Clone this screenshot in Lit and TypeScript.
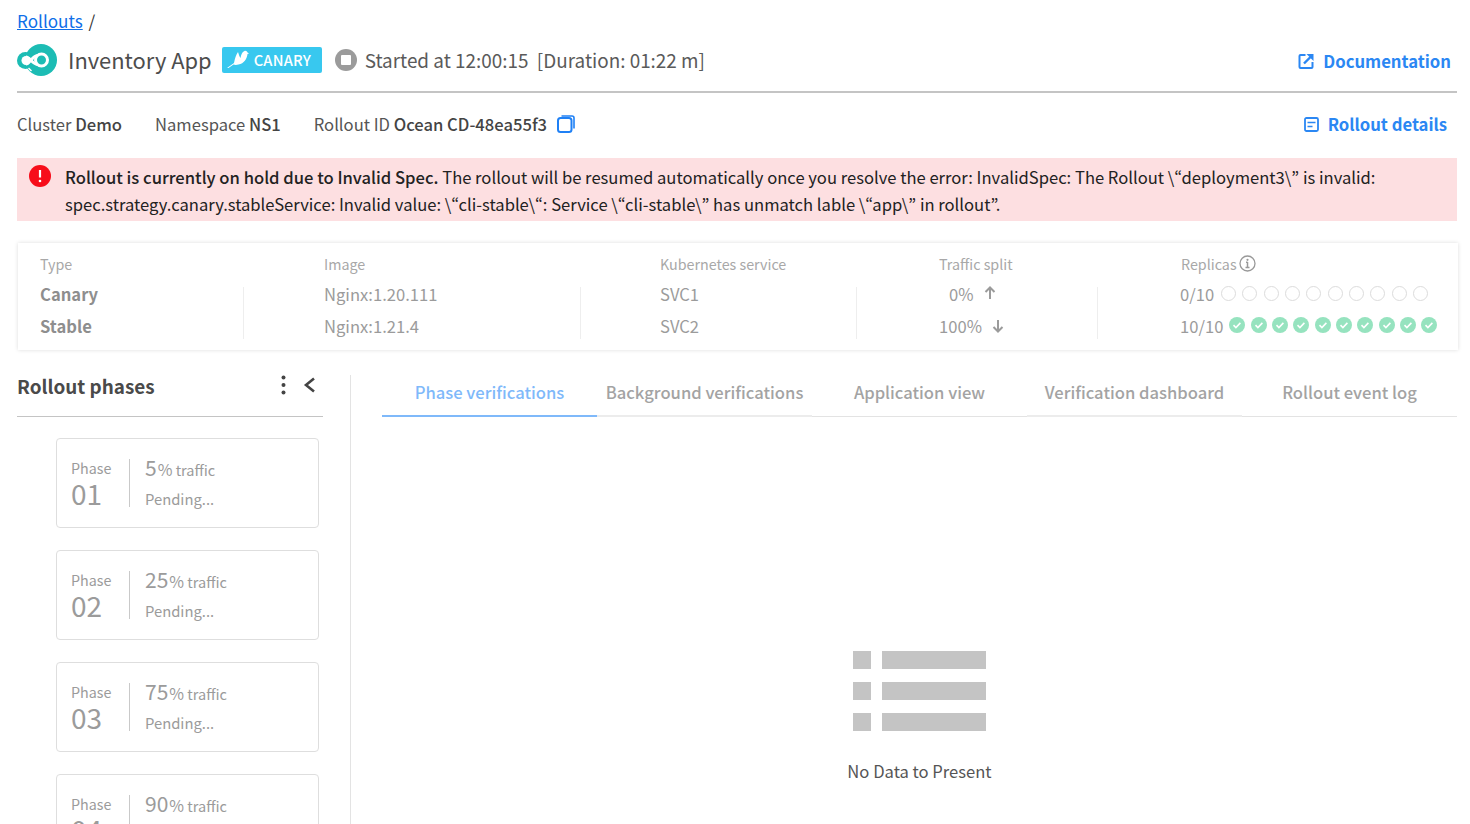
import { LitElement, html, css, svg } from 'lit';
import { customElement } from 'lit/decorators.js';

const PHASES = [
  { id: '01', pct: '5' },
  { id: '02', pct: '25' },
  { id: '03', pct: '75' },
  { id: '04', pct: '90' },
];
const TABS = [
  'Phase verifications',
  'Background verifications',
  'Application view',
  'Verification dashboard',
  'Rollout event log',
];
const TEN = Array.from({ length: 10 });

const logo = svg`<svg class="logo" width="40" height="32" viewBox="0 0 40 32">
  <circle cx="24" cy="16" r="16" fill="#1cbcb4"/>
  <circle cx="8.500" cy="16.500" r="8.500" fill="#1cbcb4"/>
  <circle cx="9" cy="16.500" r="4.500" fill="#fff"/>
  <circle cx="24.500" cy="16" r="6" fill="none" stroke="#fff" stroke-width="3"/>
  <path d="M9 13C13 13 15 20 20.500 20.500M9 20C13 20 15 12 20.500 11.500" fill="none" stroke="#fff" stroke-width="2.800"/>
  <path d="M11.500 24l3 3" stroke="#fff" stroke-width="1.500"/>
</svg>`;

const bird = svg`<svg width="22" height="18" viewBox="0 0 22 18">
  <path d="M0 18L7 13C8 8 9 5 11 2C12 5 12.500 7 13.500 8C14 5 15 2 17.500 1C19 .5 20 1.500 20.500 2.500L22 3.500L20.500 4C20 9 17 13.500 11.500 14.500C9.500 15 8 15 6.500 14.500L1.500 18Z" fill="#fff"/>
</svg>`;

const check = svg`<svg width="16" height="16" viewBox="0 0 16 16">
  <circle cx="8" cy="8" r="8" fill="#96e3bf"/>
  <path d="M4.500 8.200l2.400 2.300 4.500-4.600" fill="none" stroke="#fff" stroke-width="1.600"/>
</svg>`;

@customElement('app-root')
export class AppRoot extends LitElement {
  static styles = css`
    :host {
      display: block;
      height: 824px;
      overflow: hidden;
      box-sizing: border-box;
      padding: 0 13px 0 17px;
      background: #fff;
      color: #4a4a4a;
      font-family: 'Noto Sans CJK JP', 'Noto Sans', sans-serif;
      font-size: 16.6px;
    }
    a {
      color: #0f6fe8;
    }
    .crumb {
      height: 34px;
      line-height: 42px;
      font-size: 17.1px;
      color: #333;
    }
    .crumb a {
      margin-right: 2px;
    }
    .head {
      display: flex;
      align-items: center;
      height: 54px;
      padding-bottom: 3px;
      border-bottom: 2px solid #c4c4c4;
    }
    .logo {
      margin: -2px 11px 0 0;
    }
    .app {
      margin-top: -2px;
      font-size: 21.9px;
      line-height: 32px;
      color: #4d4d4d;
    }
    .badge {
      display: flex;
      align-items: center;
      gap: 5px;
      width: 100px;
      box-sizing: border-box;
      height: 26px;
      margin: -2px 0 0 10px;
      padding: 0 0 2px 5px;
      border-radius: 2px;
      background: #38c8ef;
      color: #fff;
      font-size: 14.7px;
      font-weight: 500;
      letter-spacing: 0.2px;
    }
    .stop {
      display: flex;
      align-items: center;
      justify-content: center;
      width: 22px;
      height: 22px;
      margin: -2px 8px 0 13px;
      border-radius: 50%;
      background: #9b9b9b;
    }
    .stop i {
      width: 10px;
      height: 10px;
      border-radius: 1px;
      background: #fff;
    }
    .started {
      margin-top: -3px;
      font-size: 18.9px;
      color: #5a5a5a;
    }
    .link {
      display: flex;
      align-items: center;
      color: #2b87f3;
      font-weight: 700;
      font-size: 16.7px;
      gap: 9px;
    }
    .head .link {
      margin-left: auto;
      padding-right: 6px;
    }
    .meta {
      display: flex;
      align-items: center;
      height: 62px;
      margin-bottom: 3px;
      color: #555;
    }
    .meta span + span {
      margin-left: 33px;
    }
    .meta b {
      font-weight: 500;
      color: #444;
    }
    .copy {
      margin-left: 10px;
    }
    .meta .link {
      margin-left: auto;
      padding-right: 10px;
    }
    .alert {
      display: flex;
      height: 63px;
      box-sizing: border-box;
      padding: 6px 0 0 12px;
      background: #fddfe1;
      color: #222;
      line-height: 27px;
    }
    .alert svg {
      flex: none;
      margin: 1px 14px 0 0;
    }
    .alert b {
      font-weight: 500;
    }
    .card {
      display: flex;
      height: 107px;
      box-sizing: border-box;
      margin: 22px -1px 25px 1px;
      padding: 10px 0 0 22px;
      box-shadow: 0 0 4px rgba(0, 0, 0, 0.14);
      color: #9b9b9b;
    }
    .col {
      display: flex;
      flex-direction: column;
    }
    .col .label {
      height: 25px;
      line-height: 21px;
      font-size: 14.3px;
      color: #a8a8a8;
    }
    .col .body {
      display: flex;
    }
    .rows {
      flex: 1;
    }
    .rows > div {
      display: flex;
      align-items: center;
      height: 32px;
    }
    .rule {
      width: 1px;
      margin: 9px 0 3px;
      background: #eee;
    }
    .type {
      width: 204px;
      margin-right: 80px;
    }
    .image {
      width: 257px;
      margin-right: 79px;
    }
    .svc {
      width: 197px;
      margin-right: 82px;
    }
    .split {
      width: 159px;
      margin-right: 83px;
    }
    .type .rows {
      font-weight: 700;
      color: #8e8e8e;
    }
    .split .rows > div {
      gap: 10px;
    }
    .split .rows > div:first-child {
      padding-left: 10px;
    }
    .split .rows > div:first-child svg {
      margin-top: -4px;
    }
    .col .label-info {
      display: flex;
      align-items: center;
      gap: 2px;
      height: 21px;
      margin-bottom: 4px;
    }
    .replicas .rows {
      margin-left: -1px;
    }
    .dots {
      display: flex;
      justify-content: space-between;
      align-items: center;
      width: 208px;
      margin: -2px 0 0 6px;
    }
    .dots.idle {
      width: 207px;
      margin-left: 7px;
    }
    .dots i {
      width: 15px;
      height: 15px;
      box-sizing: border-box;
      border: 1px solid #dcdcdc;
      border-radius: 50%;
    }
    .lower {
      display: flex;
    }
    .side {
      flex: none;
      width: 306px;
      margin-right: 27px;
    }
    .side-head {
      display: flex;
      align-items: center;
      height: 41px;
      border-bottom: 1px solid #c4c4c4;
      font-size: 18.9px;
      font-weight: 700;
      color: #4a4a4a;
    }
    .side-head .title {
      margin: -20px auto 0 0;
    }
    .side-head svg {
      margin-top: -21px;
    }
    .phase {
      display: flex;
      height: 90px;
      box-sizing: border-box;
      margin: 0 4px 22px 39px;
      padding: 20px 0 0 14px;
      border: 1px solid #dedede;
      border-radius: 4px;
      color: #9b9b9b;
    }
    .side-head + .phase {
      margin-top: 21px;
    }
    .phase .num {
      width: 58px;
      height: 48px;
      border-right: 1px solid #c9c9c9;
      margin-right: 15px;
      font-size: 14.3px;
    }
    .phase .num span {
      display: block;
      margin-top: -1px;
      line-height: 19px;
    }
    .phase .num b {
      display: block;
      margin-top: 1px;
      font-weight: 400;
      font-size: 28px;
      line-height: 31px;
    }
    .phase .pct {
      height: 24px;
      margin-top: -4px;
      line-height: 24px;
      font-size: 14.5px;
    }
    .phase .pct b {
      font-weight: 400;
      font-size: 21px;
    }
    .phase .pct em {
      font-style: normal;
      font-size: 16px;
      margin-left: 1px;
    }
    .phase .state {
      margin-top: 9px;
      font-size: 14.8px;
      line-height: 22px;
    }
    .main {
      flex: 1;
      padding-left: 31px;
      border-left: 1px solid #e3e3e3;
      height: 449px;
    }
    .tabs {
      display: grid;
      grid-template-columns: repeat(5, 1fr);
    }
    .tab {
      height: 42px;
      box-sizing: border-box;
      border-bottom: 1px solid #e3e3e3;
      text-align: center;
      line-height: 34px;
      color: #a3a3a3;
      font-weight: 500;
    }
    .tab:nth-child(even) {
      border-bottom: 2px solid #ececec;
    }
    .tab.on {
      border-bottom: 2px solid #7fb9fa;
      color: #7fb9fa;
    }
    .empty {
      display: flex;
      flex-direction: column;
      align-items: center;
      margin-top: 234px;
      color: #555;
    }
    .empty p {
      margin: 27px 0 0;
      line-height: 26px;
    }
    .list {
      display: grid;
      grid-template-columns: 18px 104px;
      gap: 13px 11px;
    }
    .list i {
      height: 18px;
      background: #c4c4c4;
    }
  `;

  render() {
    return html`
      <div class="crumb"><a href="#">Rollouts</a> /</div>
      <div class="head">
        ${logo}
        <span class="app">Inventory App</span>
        <span class="badge">${bird} CANARY</span>
        <span class="stop"><i></i></span>
        <span class="started">Started at 12:00:15&nbsp; [Duration: 01:22 m]</span>
        <span class="link">
          <svg width="16" height="16" viewBox="-0.5 0 16 16" fill="none" stroke="currentColor" stroke-width="2">
            <path d="M7 2H2a1 1 0 0 0-1 1v11a1 1 0 0 0 1 1h11a1 1 0 0 0 1-1V9"/>
            <path d="M5.500 10.500 12 4" stroke-width="2.400"/>
            <path d="M8 1h7v7z" fill="currentColor" stroke="none"/>
          </svg>
          Documentation
        </span>
      </div>
      <div class="meta">
        <span>Cluster <b>Demo</b></span>
        <span>Namespace <b>NS1</b></span>
        <span>Rollout ID <b>Ocean CD-48ea55f3</b></span>
        <svg class="copy" width="18" height="18" viewBox="0 0 18 18" fill="none" stroke="#1f80f5" stroke-width="2">
          <rect x="1" y="3" width="13.500" height="14" rx="2.500"/>
          <path d="M4.500 1h10.500a2 2 0 0 1 2 2v10.500" stroke-width="1.600"/>
        </svg>
        <span class="link">
          <svg width="15" height="15" viewBox="0 0 15 15" fill="none" stroke="currentColor" stroke-width="1.800">
            <rect x="1" y="1" width="13" height="13" rx="1.500"/>
            <path d="M3.500 5.500h8M3.500 9.500h5" stroke-width="1.500"/>
          </svg>
          Rollout details
        </span>
      </div>
      <div class="alert">
        <svg width="22" height="22" viewBox="0 0 22 22">
          <circle cx="11" cy="11" r="11" fill="#f70d1a"/>
          <path d="M11 5v7.500" stroke="#fff" stroke-width="2.200"/>
          <circle cx="11" cy="16" r="1.300" fill="#fff"/>
        </svg>
        <div>
          <b>Rollout is currently on hold due to Invalid Spec.</b> The rollout will be resumed automatically once you resolve the error: InvalidSpec: The Rollout \\“deployment3\\” is invalid:<br />
          spec.strategy.canary.stableService: Invalid value: \\“cli-stable\\“: Service \\“cli-stable\\” has unmatch lable \\“app\\” in rollout”.
        </div>
      </div>
      <div class="card">
        <div class="col type">
          <div class="label">Type</div>
          <div class="body">
            <div class="rows"><div>Canary</div><div>Stable</div></div>
            <div class="rule"></div>
          </div>
        </div>
        <div class="col image">
          <div class="label">Image</div>
          <div class="body">
            <div class="rows"><div>Nginx:1.20.111</div><div>Nginx:1.21.4</div></div>
            <div class="rule"></div>
          </div>
        </div>
        <div class="col svc">
          <div class="label">Kubernetes service</div>
          <div class="body">
            <div class="rows"><div>SVC1</div><div>SVC2</div></div>
            <div class="rule"></div>
          </div>
        </div>
        <div class="col split">
          <div class="label">Traffic split</div>
          <div class="body">
            <div class="rows">
              <div>0%
                <svg width="12" height="13" viewBox="0 0 12 13" fill="none" stroke="#9b9b9b" stroke-width="2"><path d="M6 13V2M1.500 6 6 1.500 10.500 6"/></svg>
              </div>
              <div>100%
                <svg width="12" height="13" viewBox="0 0 12 13" fill="none" stroke="#9b9b9b" stroke-width="2"><path d="M6 0v11M1.500 7 6 11.500 10.500 7"/></svg>
              </div>
            </div>
            <div class="rule"></div>
          </div>
        </div>
        <div class="col replicas">
          <div class="label label-info">Replicas
            <svg width="17" height="17" viewBox="0 0 17 17" fill="none" stroke="#999" stroke-width="1.300">
              <circle cx="8.500" cy="8.500" r="7.500"/>
              <path d="M8.500 7v5M6.500 12.500h4M7 7.300h1.500" stroke-width="1.500"/>
              <circle cx="8.500" cy="4.800" r="1.100" fill="#999" stroke="none"/>
            </svg>
          </div>
          <div class="rows">
            <div>0/10<span class="dots idle">${TEN.map(() => html`<i></i>`)}</span></div>
            <div>10/10<span class="dots">${TEN.map(() => check)}</span></div>
          </div>
        </div>
      </div>
      <div class="lower">
        <div class="side">
          <div class="side-head">
            <span class="title">Rollout phases</span>
            <svg width="48" height="20" viewBox="0 0 48 20">
              <circle cx="8.500" cy="2.500" r="2" fill="#444"/>
              <circle cx="8.500" cy="10" r="2" fill="#444"/>
              <circle cx="8.500" cy="17.500" r="2" fill="#444"/>
              <path d="M39 3.500l-8 6.500 8 6.500" fill="none" stroke="#444" stroke-width="2.600"/>
            </svg>
          </div>
          ${PHASES.map(
            (p) => html`
              <div class="phase">
                <div class="num"><span>Phase</span><b>${p.id}</b></div>
                <div>
                  <div class="pct"><b>${p.pct}</b><em>%</em> traffic</div>
                  <div class="state">Pending...</div>
                </div>
              </div>
            `,
          )}
        </div>
        <div class="main">
          <div class="tabs">
            ${TABS.map((t, i) => html`<div class="tab ${i === 0 ? 'on' : ''}">${t}</div>`)}
          </div>
          <div class="empty">
            <div class="list">
              <i></i><i></i><i></i><i></i><i></i><i></i>
            </div>
            <p>No Data to Present</p>
          </div>
        </div>
      </div>
    `;
  }
}
